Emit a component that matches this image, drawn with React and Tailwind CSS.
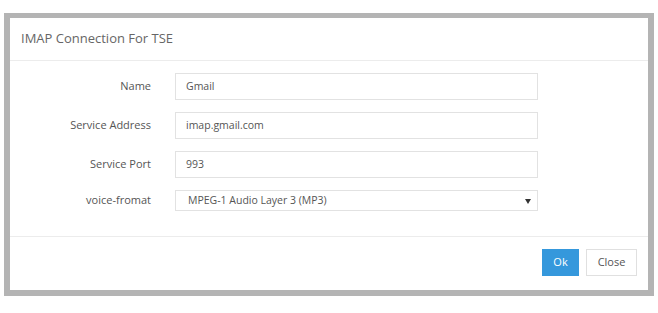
export default function App() {
  const font = { fontFamily: '"Open Sans", "Noto Sans", sans-serif' };
  const rows = [
    { label: "Name", value: "Gmail", mt: "mt-[12px]" },
    { label: "Service Address", value: "imap.gmail.com", mt: "mt-[12px]" },
    { label: "Service Port", value: "993", mt: "mt-[12px]" },
  ];
  return (
    <div className="w-[658px] h-[313px] bg-white pt-[13px] pl-[4px]" style={font}>
      <div className="w-[650px] h-[283px] border-[6px] border-t-[5px] border-[#b4b4b4] bg-white flex flex-col">
        <div className="h-[43px] border-b border-[#ececec] flex items-center pl-[11px] text-[13px] text-[#666]">
          IMAP Connection For TSE
        </div>
        <div className="flex flex-col pb-[25px]">
          {rows.map((r) => (
            <div key={r.label} className={`flex items-center ${r.mt}`}>
              <div className="w-[141px] text-right text-[11px] text-[#555]">{r.label}</div>
              <div className="ml-[24px] w-[363px] h-[27px] border border-[#e2e2e2] flex items-center pl-[10px] text-[10.5px] text-[#555]">
                {r.value}
              </div>
            </div>
          ))}
          <div className="flex items-center mt-[12px]">
            <div className="w-[141px] text-right text-[11px] text-[#555]">voice-fromat</div>
            <div className="ml-[24px] w-[363px] h-[21px] border border-[#e2e2e2] flex items-center pl-[12px] pr-[6px] text-[10.5px] text-[#555]">
              <span className="flex-1">MPEG-1 Audio Layer 3 (MP3)</span>
              <svg width="6" height="5" viewBox="0 0 6 5" className="mt-[1px]">
                <path d="M0 0 L6 0 L3 5 Z" fill="#333" />
              </svg>
            </div>
          </div>
        </div>
        <div className="flex-1 border-t border-[#ececec] flex justify-end items-start pt-[12px] pr-[11px] gap-[7px]">
          <div className="w-[37px] h-[27px] bg-[#3598dc] text-white text-[11px] flex items-center justify-center">Ok</div>
          <div className="w-[51px] h-[27px] border border-[#e0e0e0] bg-white text-[#555] text-[11px] flex items-center justify-center">Close</div>
        </div>
      </div>
    </div>
  );
}
